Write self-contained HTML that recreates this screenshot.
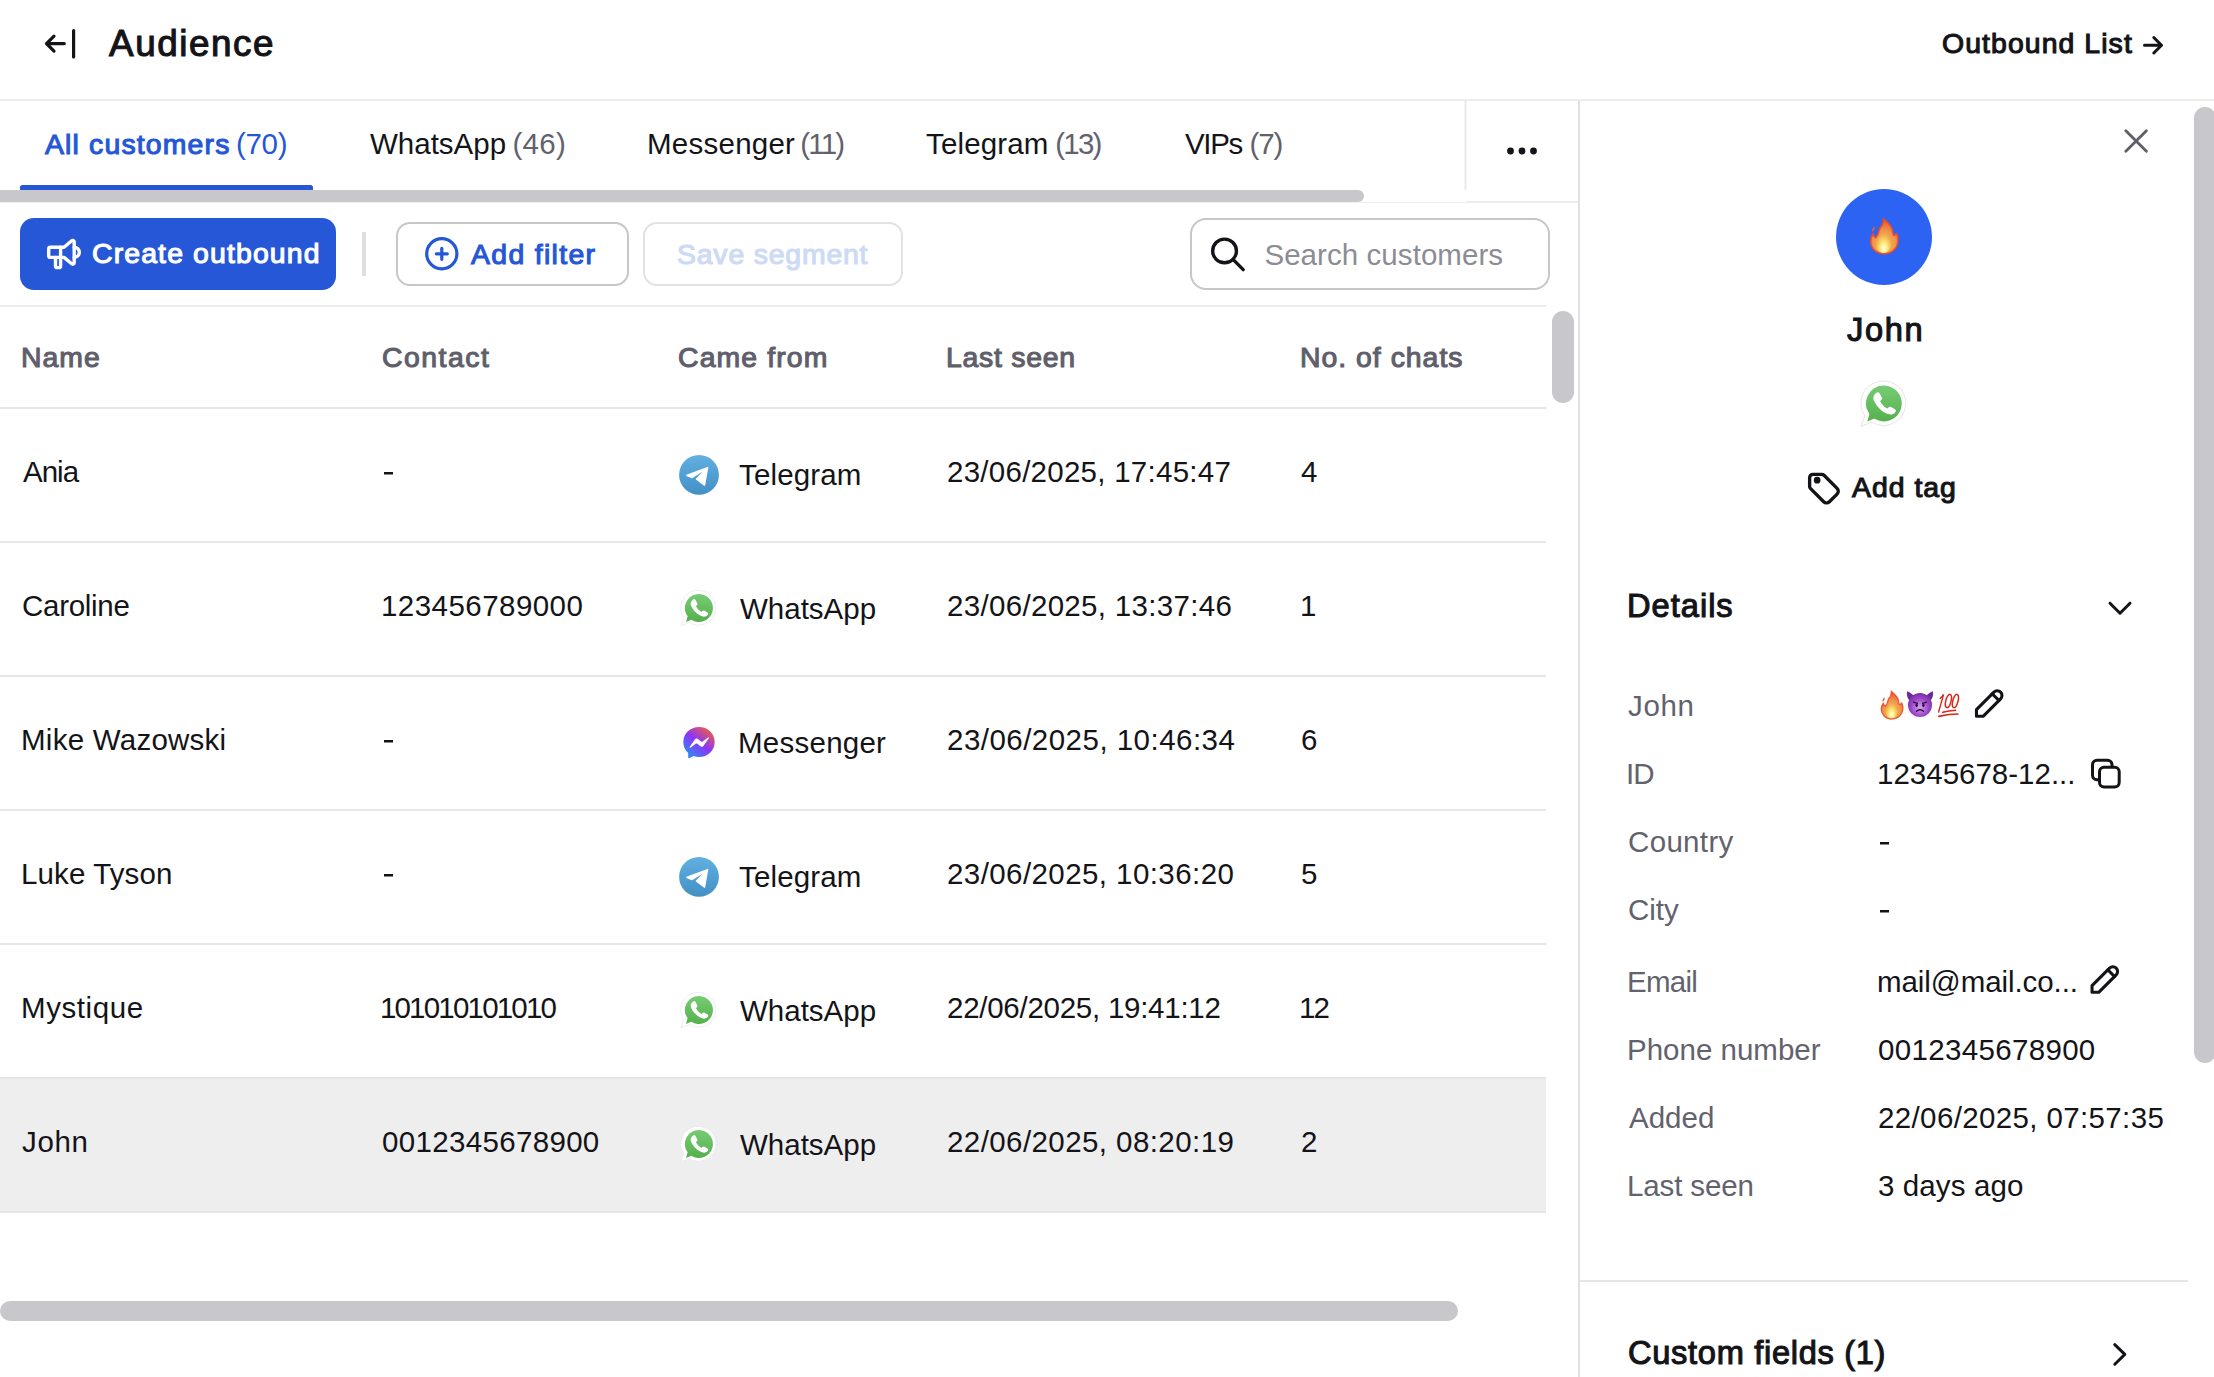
<!DOCTYPE html>
<html><head><meta charset="utf-8"><title>Audience</title>
<style>
html,body{margin:0;padding:0;background:#fff;width:2214px;height:1377px;overflow:hidden;position:relative}
svg.bg{position:absolute;left:0;top:0}
.t{position:absolute;white-space:nowrap;line-height:1;font-family:"Liberation Sans",sans-serif}
</style></head><body>
<svg class="bg" width="2214" height="1377" viewBox="0 0 2214 1377">
<defs>
<linearGradient id="tg" x1="0" y1="0" x2="0" y2="1"><stop offset="0" stop-color="#62afe2"/><stop offset="1" stop-color="#4290c4"/></linearGradient>
<linearGradient id="wa" x1="0" y1="0" x2="0" y2="1"><stop offset="0" stop-color="#77cc74"/><stop offset="1" stop-color="#56b04e"/></linearGradient>
<linearGradient id="ms" x1="0.15" y1="0.95" x2="0.85" y2="0.05"><stop offset="0" stop-color="#2a8ef5"/><stop offset="0.5" stop-color="#8b35f6"/><stop offset="1" stop-color="#f25d45"/></linearGradient>
<radialGradient id="fireo" cx="0.5" cy="0.75" r="0.75"><stop offset="0" stop-color="#f6c25a"/><stop offset="0.55" stop-color="#f0954a"/><stop offset="0.85" stop-color="#ea6436"/><stop offset="1" stop-color="#e5472a"/></radialGradient>
<radialGradient id="firei" cx="0.52" cy="0.82" r="0.62"><stop offset="0" stop-color="#fffdf0"/><stop offset="0.3" stop-color="#fdf08a"/><stop offset="0.65" stop-color="#f6c65a"/><stop offset="1" stop-color="#f2a04c" stop-opacity="0"/></radialGradient>
<radialGradient id="dv" cx="0.5" cy="0.6" r="0.6"><stop offset="0" stop-color="#d8a0f0"/><stop offset="0.6" stop-color="#9a48c8"/><stop offset="1" stop-color="#7a2aa8"/></radialGradient>
</defs>
<rect x="0" y="99" width="2214" height="2" fill="#ececec"/>
<g stroke="#141418" stroke-width="3.2" stroke-linecap="round" stroke-linejoin="round" fill="none"><path d="M46.5 43.6H64.3M54 36.2L46.5 43.6L54 51.1"/><path d="M73.6 30.6V57"/></g>
<g stroke="#141418" stroke-width="3" stroke-linecap="round" stroke-linejoin="round" fill="none"><path d="M2144.5 45.3H2161.5M2153.8 37.5L2161.5 45.3L2153.8 53"/></g>
<rect x="20" y="185" width="293" height="10" rx="2.5" fill="#2557d6"/>
<rect x="-12" y="190" width="1376" height="12" rx="6" fill="#c8c7cc"/>
<rect x="1464.5" y="101" width="2" height="89" fill="#e9e9e9"/>
<rect x="0" y="202" width="1466" height="1" fill="#f0f0f0"/>
<rect x="1466" y="201" width="112" height="2" fill="#ededed"/>
<circle cx="1510.5" cy="151" r="3.4" fill="#141418"/>
<circle cx="1522" cy="151" r="3.4" fill="#141418"/>
<circle cx="1533.5" cy="151" r="3.4" fill="#141418"/>
<rect x="1578" y="101" width="2" height="1276" fill="#e0e0e2"/>
<rect x="20" y="218" width="316" height="72" rx="14" fill="#2557d6"/>
<g transform="translate(43.6 233.6) scale(1.7)" stroke="#fff" stroke-width="2" stroke-linecap="round" stroke-linejoin="round" fill="none"><path d="M18 8a3 3 0 0 1 0 6"/><path d="M10 8v11a1 1 0 0 1 -1 1h-1a1 1 0 0 1 -1 -1v-5"/><path d="M12 8h0l4.524 -3.77a.9 .9 0 0 1 1.476 .692v12.156a.9 .9 0 0 1 -1.476 .692l-4.524 -3.77h-8a1 1 0 0 1 -1 -1v-4a1 1 0 0 1 1 -1h8"/></g>
<rect x="362" y="232" width="4" height="44" fill="#dedee0"/>
<rect x="397" y="223" width="231" height="62" rx="13" fill="none" stroke="#c6c6cb" stroke-width="2"/>
<g stroke="#2557d6" stroke-width="3.2" stroke-linecap="round" fill="none"><circle cx="441.8" cy="253.8" r="15.1"/><path d="M436.3 253.8H447.3M441.8 248.3V259.3"/></g>
<rect x="644" y="223" width="258" height="62" rx="13" fill="none" stroke="#e2e2e4" stroke-width="2"/>
<rect x="1191" y="219" width="358" height="70" rx="15" fill="none" stroke="#c6c6cb" stroke-width="2"/>
<g transform="translate(1207.6 234) scale(1.695)" stroke="#141418" stroke-width="2" stroke-linecap="round" fill="none"><circle cx="10" cy="10" r="7"/><path d="M21 21l-6 -6"/></g>
<rect x="0" y="305" width="1546" height="2" fill="#ececec"/>
<rect x="0" y="1078" width="1546" height="134" fill="#eeeeee"/>
<rect x="0" y="407" width="1546" height="2" fill="#e6e6e6"/>
<rect x="0" y="541" width="1546" height="2" fill="#e6e6e6"/>
<rect x="0" y="675" width="1546" height="2" fill="#e6e6e6"/>
<rect x="0" y="809" width="1546" height="2" fill="#e6e6e6"/>
<rect x="0" y="943" width="1546" height="2" fill="#e6e6e6"/>
<rect x="0" y="1077" width="1546" height="2" fill="#e6e6e6"/>
<rect x="0" y="1211" width="1546" height="2" fill="#e6e6e6"/>
<rect x="384" y="472" width="9" height="2.5" fill="#141418"/>
<rect x="384" y="740" width="9" height="2.5" fill="#141418"/>
<rect x="384" y="874" width="9" height="2.5" fill="#141418"/>
<rect x="1880" y="842" width="9" height="2.5" fill="#141418"/>
<rect x="1880" y="910" width="9" height="2.5" fill="#141418"/>
<rect x="1552" y="311" width="22" height="92" rx="11" fill="#c8c7cc"/>
<rect x="0" y="1301" width="1458" height="20" rx="10" fill="#c8c7cc"/>
<g transform="translate(674 450)"><circle cx="25" cy="24.9" r="19.9" fill="url(#tg)"/><path d="M12.2 25.6C12 25.2 12.3 24.8 12.9 24.6L33.4 16.9C34 16.7 34.4 17.1 34.3 17.8L31.2 35.3C31.1 35.9 30.6 36.1 30.1 35.8L21.9 29.6C21.5 29.3 21.6 28.8 22 28.5L28.8 21.4L18.6 28C18.2 28.3 17.6 28.3 17.1 28.1L12.9 26.3C12.6 26.2 12.3 25.9 12.2 25.6Z" fill="#fff"/></g>
<g transform="translate(699 608) scale(1.0)"><path d="M0 -17.6A17.4 17.4 0 1 1 -9.6 14.6L-18 17.8L-15 9.6A17.4 17.4 0 0 1 0 -17.6Z" fill="#fff" stroke="#e8e8e8" stroke-width="0.8"/><path d="M0 -14A14 14 0 1 1 -7.6 11.8L-13 14L-11.4 8.2A14 14 0 0 1 0 -14Z" fill="url(#wa)"/><path d="M-6.2 -8.2C-5.4 -9 -4.2 -9.2 -3.6 -8.2L-1.8 -4.8C-1.4 -4 -1.6 -3.2 -2.3 -2.6L-3.1 -1.9C-2 0.6 0.2 2.8 2.6 4L3.4 3.1C4 2.5 4.8 2.3 5.6 2.7L8.6 4.4C9.5 4.9 9.5 6.2 8.7 7C7.2 8.5 5.2 9.1 3.2 8.3C-1.8 6.4 -5.8 2.4 -8 -2.6C-8.8 -4.6 -8 -6.8 -6.2 -8.2Z" fill="#fff"/></g>
<g transform="translate(674 717.5)"><path d="M25 9.4C16.2 9.4 9.3 15.8 9.3 24.5C9.3 29 11.1 32.9 14.2 35.6V40C14.2 40.6 14.8 41 15.4 40.7L19.6 38.6C21.3 39.2 23.1 39.5 25 39.5C33.8 39.5 40.7 33.1 40.7 24.4C40.7 15.7 33.8 9.4 25 9.4Z" fill="url(#ms)"/><path d="M15.6 29.6L21 21.8C21.6 20.9 22.8 20.7 23.6 21.3L27.4 24.2C27.7 24.4 28.1 24.4 28.4 24.2L34 20C34.5 19.6 35.1 20.2 34.8 20.7L29.4 28.5C28.8 29.4 27.6 29.6 26.8 29L23 26.1C22.7 25.9 22.3 25.9 22 26.1L16.4 30.3C15.9 30.7 15.3 30.1 15.6 29.6Z" fill="#fff"/></g>
<g transform="translate(674 852)"><circle cx="25" cy="24.9" r="19.9" fill="url(#tg)"/><path d="M12.2 25.6C12 25.2 12.3 24.8 12.9 24.6L33.4 16.9C34 16.7 34.4 17.1 34.3 17.8L31.2 35.3C31.1 35.9 30.6 36.1 30.1 35.8L21.9 29.6C21.5 29.3 21.6 28.8 22 28.5L28.8 21.4L18.6 28C18.2 28.3 17.6 28.3 17.1 28.1L12.9 26.3C12.6 26.2 12.3 25.9 12.2 25.6Z" fill="#fff"/></g>
<g transform="translate(699 1010) scale(1.0)"><path d="M0 -17.6A17.4 17.4 0 1 1 -9.6 14.6L-18 17.8L-15 9.6A17.4 17.4 0 0 1 0 -17.6Z" fill="#fff" stroke="#e8e8e8" stroke-width="0.8"/><path d="M0 -14A14 14 0 1 1 -7.6 11.8L-13 14L-11.4 8.2A14 14 0 0 1 0 -14Z" fill="url(#wa)"/><path d="M-6.2 -8.2C-5.4 -9 -4.2 -9.2 -3.6 -8.2L-1.8 -4.8C-1.4 -4 -1.6 -3.2 -2.3 -2.6L-3.1 -1.9C-2 0.6 0.2 2.8 2.6 4L3.4 3.1C4 2.5 4.8 2.3 5.6 2.7L8.6 4.4C9.5 4.9 9.5 6.2 8.7 7C7.2 8.5 5.2 9.1 3.2 8.3C-1.8 6.4 -5.8 2.4 -8 -2.6C-8.8 -4.6 -8 -6.8 -6.2 -8.2Z" fill="#fff"/></g>
<g transform="translate(699 1144) scale(1.0)"><path d="M0 -17.6A17.4 17.4 0 1 1 -9.6 14.6L-18 17.8L-15 9.6A17.4 17.4 0 0 1 0 -17.6Z" fill="#fff" stroke="#e8e8e8" stroke-width="0.8"/><path d="M0 -14A14 14 0 1 1 -7.6 11.8L-13 14L-11.4 8.2A14 14 0 0 1 0 -14Z" fill="url(#wa)"/><path d="M-6.2 -8.2C-5.4 -9 -4.2 -9.2 -3.6 -8.2L-1.8 -4.8C-1.4 -4 -1.6 -3.2 -2.3 -2.6L-3.1 -1.9C-2 0.6 0.2 2.8 2.6 4L3.4 3.1C4 2.5 4.8 2.3 5.6 2.7L8.6 4.4C9.5 4.9 9.5 6.2 8.7 7C7.2 8.5 5.2 9.1 3.2 8.3C-1.8 6.4 -5.8 2.4 -8 -2.6C-8.8 -4.6 -8 -6.8 -6.2 -8.2Z" fill="#fff"/></g>
<g stroke="#5f5f6a" stroke-width="2.8" stroke-linecap="round" fill="none"><path d="M2125.8 130.8L2146.4 151.2M2146.4 130.8L2125.8 151.2"/></g>
<circle cx="1884" cy="237" r="48" fill="#2c63f2"/>
<g transform="translate(1870.6 218.3) scale(1.0000 1.0000)"><path d="M12.7 0.2C15.5 3 20.5 6 21.6 11C22.2 13.5 22 15.5 23.2 17.2C24.4 16.8 25.4 16 26 15C27.2 17.5 27.8 20.5 27.4 23.4C27 29 22 35.5 13.5 35.5C5.5 35.5 0.2 30 0 23C-0.1 19.6 1.2 17 2.6 15.2C2.9 17.2 3.9 18.8 5.2 19.5C6.6 17.8 7.8 15.5 8.2 13.2C8.7 10.3 9.5 8.4 11.4 7.2C12.6 5 12.9 2.4 12.7 0.2Z" fill="url(#fireo)" stroke="#e64a2b" stroke-width="1.7" stroke-opacity="0.85" stroke-linejoin="round"/><path d="M13.2 8.5C15.8 12.5 19.8 16.5 20.6 22.5C21.3 28.5 18 34.6 13.4 34.6C8.6 34.6 5 31 5.2 26C5.4 21.5 8.6 19 10.8 15.5C12 13.5 13 11 13.2 8.5Z" fill="url(#firei)"/><ellipse cx="2.9" cy="10.9" rx="1.05" ry="2.6" transform="rotate(28 2.9 10.9)" fill="#ea5a2e"/></g>
<g transform="translate(1884 403.5) scale(1.28)"><path d="M0 -17.6A17.4 17.4 0 1 1 -9.6 14.6L-18 17.8L-15 9.6A17.4 17.4 0 0 1 0 -17.6Z" fill="#fff" stroke="#e8e8e8" stroke-width="0.8"/><path d="M0 -14A14 14 0 1 1 -7.6 11.8L-13 14L-11.4 8.2A14 14 0 0 1 0 -14Z" fill="url(#wa)"/><path d="M-6.2 -8.2C-5.4 -9 -4.2 -9.2 -3.6 -8.2L-1.8 -4.8C-1.4 -4 -1.6 -3.2 -2.3 -2.6L-3.1 -1.9C-2 0.6 0.2 2.8 2.6 4L3.4 3.1C4 2.5 4.8 2.3 5.6 2.7L8.6 4.4C9.5 4.9 9.5 6.2 8.7 7C7.2 8.5 5.2 9.1 3.2 8.3C-1.8 6.4 -5.8 2.4 -8 -2.6C-8.8 -4.6 -8 -6.8 -6.2 -8.2Z" fill="#fff"/></g>
<g transform="translate(1804.6 467.6) scale(1.675)" stroke="#141418" stroke-width="2" stroke-linecap="round" stroke-linejoin="round" fill="none"><path d="M7.5 7.5m-1 0a1 1 0 1 0 2 0a1 1 0 1 0 -2 0"/><path d="M3 6v5.172a2 2 0 0 0 .586 1.414l7.81 7.81a2.41 2.41 0 0 0 3.408 0l4.592 -4.592a2.41 2.41 0 0 0 0 -3.408l-7.81 -7.81a2 2 0 0 0 -1.414 -.586h-5.172a2 2 0 0 0 -2 2z"/></g>
<path d="M2110 603.2L2120 613.2L2130 603.2" stroke="#141418" stroke-width="3" stroke-linecap="round" stroke-linejoin="round" fill="none"/>
<g transform="translate(1881.3 691.1) scale(0.7847 0.7859)"><path d="M12.7 0.2C15.5 3 20.5 6 21.6 11C22.2 13.5 22 15.5 23.2 17.2C24.4 16.8 25.4 16 26 15C27.2 17.5 27.8 20.5 27.4 23.4C27 29 22 35.5 13.5 35.5C5.5 35.5 0.2 30 0 23C-0.1 19.6 1.2 17 2.6 15.2C2.9 17.2 3.9 18.8 5.2 19.5C6.6 17.8 7.8 15.5 8.2 13.2C8.7 10.3 9.5 8.4 11.4 7.2C12.6 5 12.9 2.4 12.7 0.2Z" fill="url(#fireo)" stroke="#e64a2b" stroke-width="1.7" stroke-opacity="0.85" stroke-linejoin="round"/><path d="M13.2 8.5C15.8 12.5 19.8 16.5 20.6 22.5C21.3 28.5 18 34.6 13.4 34.6C8.6 34.6 5 31 5.2 26C5.4 21.5 8.6 19 10.8 15.5C12 13.5 13 11 13.2 8.5Z" fill="url(#firei)"/><ellipse cx="2.9" cy="10.9" rx="1.05" ry="2.6" transform="rotate(28 2.9 10.9)" fill="#ea5a2e"/></g>
<g transform="translate(1906 690.9)"><path d="M1.2 0.4C0.2 4 1.6 8.6 4.6 10.6L8.4 5.2C6.2 3.4 3.6 1.2 1.2 0.4Z" fill="#6a2a9a"/><path d="M26.8 0.4C27.8 4 26.4 8.6 23.4 10.6L19.6 5.2C21.8 3.4 24.4 1.2 26.8 0.4Z" fill="#6a2a9a"/><circle cx="14" cy="14" r="12" fill="url(#dv)"/><path d="M7.6 11.2L11.4 12.4M20.4 11.2L16.6 12.4" stroke="#2a0b3a" stroke-width="1.4" stroke-linecap="round"/><ellipse cx="10.6" cy="14.4" rx="1.2" ry="1.6" fill="#2a0b3a"/><ellipse cx="17.4" cy="14.4" rx="1.2" ry="1.6" fill="#2a0b3a"/><path d="M10.6 20.4C12.4 18.4 15.6 18.4 17.4 20.4" stroke="#2a0b3a" stroke-width="1.5" stroke-linecap="round" fill="none"/></g>
<g transform="translate(1937 692.8)" stroke="#d8281a" stroke-linecap="round" fill="none"><path d="M3.2 5.6C4.4 4.8 5.6 3.4 6.6 1.6L1.6 19.2" stroke-width="1.4"/><ellipse cx="11.4" cy="8.2" rx="2.6" ry="6.8" transform="rotate(14 11.4 8.2)" stroke-width="1.5"/><ellipse cx="18.4" cy="8.2" rx="2.6" ry="6.8" transform="rotate(14 18.4 8.2)" stroke-width="1.5"/><path d="M5.8 19.4C10 18.2 14.2 17.6 18.6 17.4" stroke-width="1.6"/><path d="M1.8 23.6C8 22.2 14.8 21.2 21 21.2" stroke-width="1.6"/></g>
<g transform="translate(1969.8 683) scale(1.665)" stroke="#141418" stroke-width="1.85" stroke-linecap="round" stroke-linejoin="round" fill="none"><path d="M4 20h4l10.5 -10.5a2.828 2.828 0 1 0 -4 -4l-10.5 10.5v4"/><path d="M13.5 6.5l4 4"/></g>
<g transform="translate(2085.4 959) scale(1.665)" stroke="#141418" stroke-width="1.85" stroke-linecap="round" stroke-linejoin="round" fill="none"><path d="M4 20h4l10.5 -10.5a2.828 2.828 0 1 0 -4 -4l-10.5 10.5v4"/><path d="M13.5 6.5l4 4"/></g>
<g stroke="#141418" stroke-width="3" fill="none"><rect x="2092.5" y="760.3" width="19.5" height="19.5" rx="4.5"/><rect x="2099.5" y="767.3" width="19.7" height="19.6" rx="4.5" fill="#fff"/></g>
<rect x="1580" y="1280" width="608" height="2" fill="#e6e6e6"/>
<path d="M2114.8 1344.6L2124.8 1354.4L2114.8 1364.2" stroke="#141418" stroke-width="3" stroke-linecap="round" stroke-linejoin="round" fill="none"/>
<rect x="2194" y="107" width="22" height="956" rx="11" fill="#c8c7cc"/>
</svg>
<div class="t" style="left:109.0px;top:26.32px;font-size:36.83px;font-weight:normal;letter-spacing:1.571px;color:#141418;-webkit-text-stroke:1.1px #141418">Audience</div>
<div class="t" style="left:1942.0px;top:29.26px;font-size:28.4px;font-weight:normal;letter-spacing:1.083px;color:#141418;-webkit-text-stroke:1.1px #141418">Outbound List</div>
<div class="t" style="left:45.0px;top:129.86px;font-size:28.4px;font-weight:normal;letter-spacing:1.167px;color:#2557d6;-webkit-text-stroke:1.1px #2557d6">All customers</div>
<div class="t" style="left:236.0px;top:129.43px;font-size:29.5px;font-weight:normal;letter-spacing:-0.333px;color:#2557d6">(70)</div>
<div class="t" style="left:370.0px;top:129.43px;font-size:29.5px;font-weight:normal;letter-spacing:0.0px;color:#141418">WhatsApp</div>
<div class="t" style="left:512.4px;top:129.43px;font-size:29.5px;font-weight:normal;letter-spacing:0.333px;color:#62626d">(46)</div>
<div class="t" style="left:647.0px;top:129.43px;font-size:29.5px;font-weight:normal;letter-spacing:0.25px;color:#141418">Messenger</div>
<div class="t" style="left:800.3px;top:129.43px;font-size:29.5px;font-weight:normal;letter-spacing:-1.8px;color:#62626d">(11)</div>
<div class="t" style="left:926.0px;top:129.43px;font-size:29.5px;font-weight:normal;letter-spacing:0.143px;color:#141418">Telegram</div>
<div class="t" style="left:1055.3px;top:129.43px;font-size:29.5px;font-weight:normal;letter-spacing:-1.8px;color:#62626d">(13)</div>
<div class="t" style="left:1185.0px;top:129.43px;font-size:29.5px;font-weight:normal;letter-spacing:-1.333px;color:#141418">VIPs</div>
<div class="t" style="left:1249.4px;top:129.43px;font-size:29.5px;font-weight:normal;letter-spacing:-1.0px;color:#62626d">(7)</div>
<div class="t" style="left:92.0px;top:239.46px;font-size:28.4px;font-weight:normal;letter-spacing:1.143px;color:#ffffff;-webkit-text-stroke:1.1px #ffffff">Create outbound</div>
<div class="t" style="left:471.0px;top:239.76px;font-size:28.4px;font-weight:normal;letter-spacing:1.333px;color:#2557d6;-webkit-text-stroke:1.1px #2557d6">Add filter</div>
<div class="t" style="left:677.0px;top:239.76px;font-size:28.4px;font-weight:normal;letter-spacing:0.818px;color:#cddaf6;-webkit-text-stroke:1.1px #cddaf6">Save segment</div>
<div class="t" style="left:1264.4px;top:239.53px;font-size:29.5px;font-weight:normal;letter-spacing:0.067px;color:#8c8c95">Search customers</div>
<div class="t" style="left:21.0px;top:342.66px;font-size:28.4px;font-weight:normal;letter-spacing:1.0px;color:#5f5f6b;-webkit-text-stroke:1.1px #5f5f6b">Name</div>
<div class="t" style="left:382.0px;top:342.66px;font-size:28.4px;font-weight:normal;letter-spacing:1.5px;color:#5f5f6b;-webkit-text-stroke:1.1px #5f5f6b">Contact</div>
<div class="t" style="left:678.0px;top:342.66px;font-size:28.4px;font-weight:normal;letter-spacing:1.125px;color:#5f5f6b;-webkit-text-stroke:1.1px #5f5f6b">Came from</div>
<div class="t" style="left:946.0px;top:342.66px;font-size:28.4px;font-weight:normal;letter-spacing:0.75px;color:#5f5f6b;-webkit-text-stroke:1.1px #5f5f6b">Last seen</div>
<div class="t" style="left:1300.0px;top:342.66px;font-size:28.4px;font-weight:normal;letter-spacing:1.0px;color:#5f5f6b;-webkit-text-stroke:1.1px #5f5f6b">No. of chats</div>
<div class="t" style="left:23.0px;top:457.23px;font-size:29.5px;font-weight:normal;letter-spacing:-1.0px;color:#141418">Ania</div>
<div class="t" style="left:739.0px;top:460.23px;font-size:29.5px;font-weight:normal;letter-spacing:0.143px;color:#141418">Telegram</div>
<div class="t" style="left:947.0px;top:457.23px;font-size:29.5px;font-weight:normal;letter-spacing:0.263px;color:#141418">23/06/2025, 17:45:47</div>
<div class="t" style="left:1301.0px;top:457.23px;font-size:29.5px;font-weight:normal;letter-spacing:0px;color:#141418">4</div>
<div class="t" style="left:22.0px;top:591.23px;font-size:29.5px;font-weight:normal;letter-spacing:-0.286px;color:#141418">Caroline</div>
<div class="t" style="left:381.0px;top:591.23px;font-size:29.5px;font-weight:normal;letter-spacing:0.455px;color:#141418">123456789000</div>
<div class="t" style="left:740.0px;top:594.23px;font-size:29.5px;font-weight:normal;letter-spacing:0.0px;color:#141418">WhatsApp</div>
<div class="t" style="left:947.0px;top:591.23px;font-size:29.5px;font-weight:normal;letter-spacing:0.316px;color:#141418">23/06/2025, 13:37:46</div>
<div class="t" style="left:1300.0px;top:591.23px;font-size:29.5px;font-weight:normal;letter-spacing:0px;color:#141418">1</div>
<div class="t" style="left:21.0px;top:725.23px;font-size:29.5px;font-weight:normal;letter-spacing:0.25px;color:#141418">Mike Wazowski</div>
<div class="t" style="left:738.0px;top:728.23px;font-size:29.5px;font-weight:normal;letter-spacing:0.25px;color:#141418">Messenger</div>
<div class="t" style="left:947.0px;top:725.23px;font-size:29.5px;font-weight:normal;letter-spacing:0.474px;color:#141418">23/06/2025, 10:46:34</div>
<div class="t" style="left:1301.0px;top:725.23px;font-size:29.5px;font-weight:normal;letter-spacing:0px;color:#141418">6</div>
<div class="t" style="left:21.0px;top:859.23px;font-size:29.5px;font-weight:normal;letter-spacing:0.111px;color:#141418">Luke Tyson</div>
<div class="t" style="left:739.0px;top:862.23px;font-size:29.5px;font-weight:normal;letter-spacing:0.143px;color:#141418">Telegram</div>
<div class="t" style="left:947.0px;top:859.23px;font-size:29.5px;font-weight:normal;letter-spacing:0.421px;color:#141418">23/06/2025, 10:36:20</div>
<div class="t" style="left:1301.0px;top:859.23px;font-size:29.5px;font-weight:normal;letter-spacing:0px;color:#141418">5</div>
<div class="t" style="left:21.0px;top:993.23px;font-size:29.5px;font-weight:normal;letter-spacing:0.571px;color:#141418">Mystique</div>
<div class="t" style="left:379.9px;top:993.23px;font-size:29.5px;font-weight:normal;letter-spacing:-1.8px;color:#141418">101010101010</div>
<div class="t" style="left:740.0px;top:996.23px;font-size:29.5px;font-weight:normal;letter-spacing:0.0px;color:#141418">WhatsApp</div>
<div class="t" style="left:947.0px;top:993.23px;font-size:29.5px;font-weight:normal;letter-spacing:-0.263px;color:#141418">22/06/2025, 19:41:12</div>
<div class="t" style="left:1298.9px;top:993.23px;font-size:29.5px;font-weight:normal;letter-spacing:-1.8px;color:#141418">12</div>
<div class="t" style="left:22.0px;top:1127.23px;font-size:29.5px;font-weight:normal;letter-spacing:0.667px;color:#141418">John</div>
<div class="t" style="left:382.0px;top:1127.23px;font-size:29.5px;font-weight:normal;letter-spacing:0.333px;color:#141418">0012345678900</div>
<div class="t" style="left:740.0px;top:1130.23px;font-size:29.5px;font-weight:normal;letter-spacing:0.0px;color:#141418">WhatsApp</div>
<div class="t" style="left:947.0px;top:1127.23px;font-size:29.5px;font-weight:normal;letter-spacing:0.421px;color:#141418">22/06/2025, 08:20:19</div>
<div class="t" style="left:1301.0px;top:1127.23px;font-size:29.5px;font-weight:normal;letter-spacing:0px;color:#141418">2</div>
<div class="t" style="left:1847.0px;top:314.39px;font-size:32.62px;font-weight:normal;letter-spacing:1.667px;color:#141418;-webkit-text-stroke:1.1px #141418">John</div>
<div class="t" style="left:1852.0px;top:473.46px;font-size:28.4px;font-weight:normal;letter-spacing:1.0px;color:#141418;-webkit-text-stroke:1.1px #141418">Add tag</div>
<div class="t" style="left:1627.0px;top:590.39px;font-size:32.62px;font-weight:normal;letter-spacing:1.0px;color:#141418;-webkit-text-stroke:1.1px #141418">Details</div>
<div class="t" style="left:1628.0px;top:691.23px;font-size:29.5px;font-weight:normal;letter-spacing:0.667px;color:#62626d">John</div>
<div class="t" style="left:1626.0px;top:759.03px;font-size:29.5px;font-weight:normal;letter-spacing:-1.0px;color:#62626d">ID</div>
<div class="t" style="left:1628.0px;top:827.03px;font-size:29.5px;font-weight:normal;letter-spacing:0.333px;color:#62626d">Country</div>
<div class="t" style="left:1628.0px;top:895.03px;font-size:29.5px;font-weight:normal;letter-spacing:0.0px;color:#62626d">City</div>
<div class="t" style="left:1627.0px;top:966.63px;font-size:29.5px;font-weight:normal;letter-spacing:-0.75px;color:#62626d">Email</div>
<div class="t" style="left:1627.0px;top:1034.73px;font-size:29.5px;font-weight:normal;letter-spacing:0.0px;color:#62626d">Phone number</div>
<div class="t" style="left:1629.0px;top:1103.03px;font-size:29.5px;font-weight:normal;letter-spacing:0.0px;color:#62626d">Added</div>
<div class="t" style="left:1627.0px;top:1171.03px;font-size:29.5px;font-weight:normal;letter-spacing:-0.125px;color:#62626d">Last seen</div>
<div class="t" style="left:1877.0px;top:759.03px;font-size:29.5px;font-weight:normal;letter-spacing:0.0px;color:#141418">12345678-12...</div>
<div class="t" style="left:1877.0px;top:966.63px;font-size:29.5px;font-weight:normal;letter-spacing:-0.071px;color:#141418">mail@mail.co...</div>
<div class="t" style="left:1878.0px;top:1034.73px;font-size:29.5px;font-weight:normal;letter-spacing:0.333px;color:#141418">0012345678900</div>
<div class="t" style="left:1878.0px;top:1103.03px;font-size:29.5px;font-weight:normal;letter-spacing:0.368px;color:#141418">22/06/2025, 07:57:35</div>
<div class="t" style="left:1878.0px;top:1171.03px;font-size:29.5px;font-weight:normal;letter-spacing:0.111px;color:#141418">3 days ago</div>
<div class="t" style="left:1628.0px;top:1336.89px;font-size:32.62px;font-weight:normal;letter-spacing:0.688px;color:#141418;-webkit-text-stroke:1.1px #141418">Custom fields (1)</div>
</body></html>
